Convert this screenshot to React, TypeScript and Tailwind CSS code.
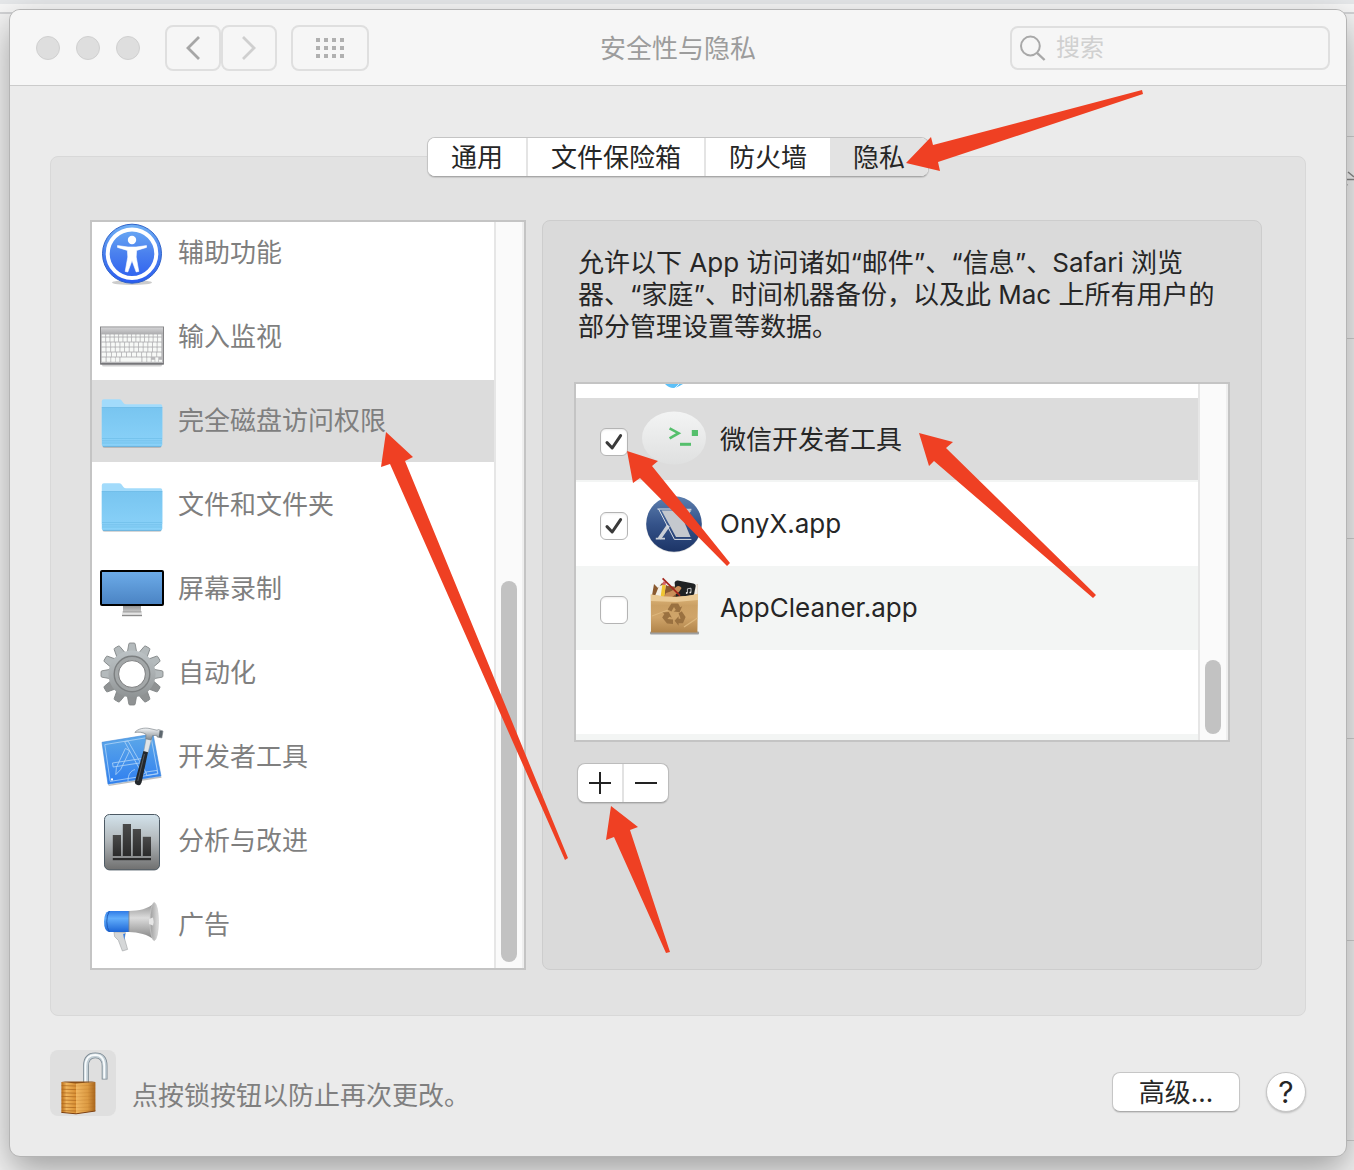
import React, { useState } from 'react';

type IconProps = { className?: string };

function AccessibilityIcon({ className }: IconProps) {
  return (
    <svg viewBox="0 0 64 64" className={className} aria-hidden="true">
      <defs>
        <linearGradient id="accBlue" x1="0" y1="0" x2="0" y2="1">
          <stop offset="0" stopColor="#6fb0f5" />
          <stop offset="0.5" stopColor="#4a80ee" />
          <stop offset="1" stopColor="#2a5cf0" />
        </linearGradient>
      </defs>
      <ellipse cx="32" cy="60.5" rx="20" ry="2.5" fill="#000" opacity="0.2" />
      <circle cx="32" cy="31.7" r="29.5" fill="url(#accBlue)" stroke="#2f62c8" />
      <circle cx="32" cy="31.7" r="24.3" fill="none" stroke="#fff" strokeWidth="4" />
      <circle cx="32" cy="18" r="4.2" fill="#fff" />
      <path
        d="M17.5 23.6 L28 25 H36 L46.5 23.6 V25.4 L36.6 28.4 L36.2 35 L38.8 49.4 L36.2 50 L32 38.5 L27.8 50 L25.2 49.4 L27.8 35 L27.4 28.4 L17.5 25.4Z"
        fill="#fff"
        stroke="#fff"
        strokeWidth="0.6"
        strokeLinejoin="round"
      />
    </svg>
  );
}

function KeyboardIcon({ className }: IconProps) {
  const rows = [
    { y: 28.6, h: 2, n: 14 },
    { y: 31.4, h: 4, n: 14 },
    { y: 36.4, h: 4, n: 13 },
    { y: 41.4, h: 4, n: 13 },
    { y: 46.4, h: 4, n: 12 },
  ];
  return (
    <svg viewBox="0 0 64 64" className={className} aria-hidden="true">
      <defs>
        <linearGradient id="kbTop" x1="0" y1="0" x2="0" y2="1">
          <stop offset="0" stopColor="#d4d4d6" />
          <stop offset="1" stopColor="#aeaeb0" />
        </linearGradient>
      </defs>
      <rect x="2" y="57" width="60" height="3.4" rx="1.5" fill="#000" opacity="0.18" />
      <rect x="0.5" y="21" width="63" height="37" fill="#b9b9bb" stroke="#858587" />
      <rect x="1" y="21.5" width="62" height="6.5" fill="url(#kbTop)" />
      <rect x="0.5" y="57" width="63" height="1.5" fill="#77777a" />
      {rows.map((row, i) => {
        const w = 60.4 / row.n;
        return Array.from({ length: row.n }, (_, k) => (
          <rect key={`${i}-${k}`} x={1.8 + k * w} y={row.y} width={w - 0.9} height={row.h} rx="0.5" fill="#f7f9f7" />
        ));
      })}
      {[1.8, 6.6, 11.2, 15.6].map((x) => (
        <rect key={x} x={x} y="51.4" width="3.8" height="4.4" rx="0.5" fill="#f7f9f7" />
      ))}
      <rect x="20.4" y="51.4" width="21" height="4.4" rx="0.5" fill="#f7f9f7" />
      <rect x="42.4" y="51.4" width="4" height="4.4" rx="0.5" fill="#f7f9f7" />
      <rect x="47.2" y="51.4" width="3.6" height="4.4" rx="0.5" fill="#f7f9f7" />
      <rect x="51.6" y="53.8" width="3" height="2" fill="#f7f9f7" />
      <rect x="55.3" y="51.4" width="3" height="4.4" fill="#f7f9f7" />
      <rect x="59" y="53.8" width="3" height="2" fill="#f7f9f7" />
    </svg>
  );
}

function FolderIcon({ className }: IconProps) {
  return (
    <svg viewBox="0 0 64 64" className={className} aria-hidden="true">
      <defs>
        <linearGradient id="folderFront" x1="0" y1="0" x2="0" y2="1">
          <stop offset="0" stopColor="#78c5f0" />
          <stop offset="1" stopColor="#8ad2f9" />
        </linearGradient>
      </defs>
      <rect x="2.5" y="50" width="59" height="8" rx="2" fill="#000" opacity="0.16" />
      <path
        d="M1.8 11.3 Q1.8 9.3 3.8 9.3 H19 Q20.6 9.3 21.6 10.6 L23.4 13 Q24.4 14.3 26 14.3 H60.3 Q62.3 14.3 62.3 16.3 V50 H1.8Z"
        fill="#a2dbfb"
      />
      <path d="M1.8 17.6 H62.3 V54.6 Q62.3 56.8 60 56.8 H4 Q1.8 56.8 1.8 54.6Z" fill="url(#folderFront)" />
      <path d="M1.8 17.5 H62.3" stroke="#6bb9e6" strokeWidth="0.8" />
      <path d="M2 48.5 H62 M2 50.8 H62 M2 53 H62" stroke="#6fbde8" strokeWidth="0.7" />
      <path d="M3 56.4 H61" stroke="#62abd6" strokeWidth="0.8" />
    </svg>
  );
}

function DisplayIcon({ className }: IconProps) {
  return (
    <svg viewBox="0 0 64 64" className={className} aria-hidden="true">
      <defs>
        <linearGradient id="screen" x1="0" y1="0" x2="0" y2="1">
          <stop offset="0" stopColor="#6cabe8" />
          <stop offset="1" stopColor="#4b84c4" />
        </linearGradient>
        <linearGradient id="stand" x1="0" y1="0" x2="0" y2="1">
          <stop offset="0" stopColor="#8e8e8e" />
          <stop offset="1" stopColor="#d0d0d0" />
        </linearGradient>
      </defs>
      <rect x="23" y="47" width="18" height="8" fill="url(#stand)" />
      <rect x="22.6" y="53.4" width="19" height="1.2" fill="#9a9a9a" />
      <rect x="22" y="54.6" width="20" height="2.2" fill="#e4e4e4" />
      <rect x="22" y="56.8" width="20" height="1.4" fill="#8b8b8b" />
      <rect x="0" y="12" width="64" height="36" rx="2" fill="#000" />
      <rect x="2" y="14" width="60" height="32" fill="url(#screen)" />
    </svg>
  );
}

function GearIcon({ className }: IconProps) {
  return (
    <svg viewBox="0 0 64 64" className={className} aria-hidden="true">
      <defs>
        <linearGradient id="gearBody" gradientUnits="userSpaceOnUse" x1="0" y1="0" x2="0" y2="64">
          <stop offset="0" stopColor="#c3cacd" />
          <stop offset="0.5" stopColor="#a9aeb0" />
          <stop offset="1" stopColor="#85898a" />
        </linearGradient>
        <mask id="gearHole">
          <rect width="64" height="64" fill="#fff" />
          <circle cx="32" cy="32" r="13.4" fill="#000" />
        </mask>
      </defs>
      <g mask="url(#gearHole)">
        <g stroke="#7d8182" strokeWidth="0.8">
          {Array.from({ length: 12 }, (_, i) => (
            <path key={i} d="M27 12 L28.8 2 Q29 1 30 1 H34 Q35 1 35.2 2 L37 12Z" fill={i > 3 && i < 9 ? '#8f9293' : '#b4babc'} transform={`rotate(${i * 30} 32 32)`} />
          ))}
        </g>
        <circle cx="32" cy="32" r="23.6" fill="url(#gearBody)" />
        <circle cx="32" cy="32" r="16" fill="none" stroke="#7c7f80" strokeWidth="5" />
        <circle cx="32" cy="32" r="15.4" fill="none" stroke="#a3a7a8" strokeWidth="3.4" />
      </g>
      <circle cx="32" cy="32" r="13.4" fill="none" stroke="#6e7071" strokeWidth="0.8" />
    </svg>
  );
}

function DevToolsIcon({ className }: IconProps) {
  return (
    <svg viewBox="0 0 64 64" className={className} aria-hidden="true">
      <defs>
        <linearGradient id="blueprint" x1="0" y1="0" x2="0" y2="1">
          <stop offset="0" stopColor="#5ea9e8" />
          <stop offset="1" stopColor="#2f7ff0" />
        </linearGradient>
        <linearGradient id="hammerHead" x1="0" y1="0" x2="0" y2="1">
          <stop offset="0" stopColor="#f4f6f7" />
          <stop offset="1" stopColor="#7d868c" />
        </linearGradient>
      </defs>
      <path d="M8.6 59.4 L61.4 51" stroke="#000" strokeWidth="1.4" opacity="0.25" />
      <path d="M2 16.3 L53 8 L61 50 L8 58.2Z" fill="url(#blueprint)" stroke="#3f86d8" strokeWidth="0.6" />
      <g fill="none" stroke="#b3d6f8" strokeWidth="0.8">
        <path d="M4.8 18.6 L51 11 L58 47.8 L10.2 55.4Z" />
        <path d="M12.5 37 L44 32.2 L44.8 36.2 L13.2 41Z" />
        <path d="M24.6 15.6 L28 15 L46 46.5 L42.6 48.6Z" />
        <path d="M25.4 22.4 L29.6 24.8 L20.6 43.6 L15.8 48.6 L16.4 41.4Z" />
        <path d="M28 55 C28 48 31 44.6 35 43.6" />
        <path d="M46 46 L57 44.4 L57.6 47.6 L46.6 49.4Z" />
      </g>
      <rect x="11" y="52.4" width="2" height="2" fill="#fff" />
      <path d="M46.6 10 L51.8 12 L48 27 L43.6 26Z" fill="#dfe4e7" stroke="#8b949a" strokeWidth="0.5" />
      <path d="M43.4 25 L48 26.2 L41.6 56.4 Q40.6 59.8 37.4 59 Q34.2 58.2 35 55.2Z" fill="#23282c" />
      <path d="M44.4 28 L37.8 55" stroke="#596066" strokeWidth="0.9" />
      <path
        d="M34.8 6.4 C38 2.6 44 1.6 49 2.4 L57 4.2 L58.4 3.6 L63 5 L61.8 12 L57.2 11 L56.6 9.4 L52.6 9.6 L51 14 L45.8 12.8 L46 8.4 C42.6 6 39 6 34.8 6.4Z"
        fill="url(#hammerHead)"
        stroke="#6d767c"
        strokeWidth="0.6"
      />
      <path d="M59.6 4.4 L62.8 5.2 L61.6 11.6 L58.8 11Z" fill="#5d676e" />
    </svg>
  );
}

function AnalyticsIcon({ className }: IconProps) {
  return (
    <svg viewBox="0 0 64 64" className={className} aria-hidden="true">
      <defs>
        <linearGradient id="chartBg" x1="0" y1="0" x2="0" y2="1">
          <stop offset="0" stopColor="#d3e3ec" />
          <stop offset="0.45" stopColor="#b3b9bc" />
          <stop offset="1" stopColor="#6f6f6f" />
        </linearGradient>
        <linearGradient id="chartBar" x1="0" y1="0" x2="0" y2="1">
          <stop offset="0" stopColor="#4a4a4a" />
          <stop offset="1" stopColor="#2b2b2b" />
        </linearGradient>
      </defs>
      <rect x="4.5" y="4.5" width="55" height="55.4" rx="5" fill="url(#chartBg)" stroke="#4d5a64" />
      <rect x="12.8" y="25" width="8.2" height="21" fill="url(#chartBar)" />
      <rect x="22.8" y="14" width="8.2" height="32" fill="url(#chartBar)" />
      <rect x="32.8" y="19" width="8.2" height="27" fill="url(#chartBar)" />
      <rect x="42.8" y="26.8" width="8.2" height="19.2" fill="url(#chartBar)" />
      <rect x="12.8" y="48" width="38.2" height="2.2" fill="#2a2a2a" />
    </svg>
  );
}

function MegaphoneIcon({ className }: IconProps) {
  return (
    <svg viewBox="0 0 64 64" className={className} aria-hidden="true">
      <defs>
        <linearGradient id="megaBlue" x1="0" y1="0" x2="0" y2="1">
          <stop offset="0" stopColor="#2f7be6" />
          <stop offset="0.35" stopColor="#62aefb" />
          <stop offset="1" stopColor="#1d66d6" />
        </linearGradient>
        <linearGradient id="megaHorn" x1="0" y1="0" x2="0" y2="1">
          <stop offset="0" stopColor="#8e8e8e" />
          <stop offset="0.4" stopColor="#dcdcdc" />
          <stop offset="1" stopColor="#7e7e7e" />
        </linearGradient>
        <linearGradient id="megaMouth" x1="0" y1="0" x2="1" y2="0">
          <stop offset="0" stopColor="#9c9c9c" />
          <stop offset="1" stopColor="#dedede" />
        </linearGradient>
      </defs>
      <path d="M14 38 L25.6 38.6 L24.4 44 L27.6 55.4 L22.4 57 L18.4 46.4 L14.6 42.6Z" fill="#d5d7d8" stroke="#9fa2a4" strokeWidth="0.6" />
      <path d="M23.2 40 L25.2 39.6 L24.2 46Z" fill="#2e7be4" />
      <path d="M29 17 H9 Q4 18.4 4 27.6 Q4 37 9 38 H29Z" fill="url(#megaBlue)" />
      <path d="M9.4 17 Q6.6 22 6.8 27.6 Q6.8 34 9.4 38" fill="none" stroke="#1b57b4" strokeWidth="0.9" />
      <path d="M29 17 C39 17 48 15 54.4 8.8 Q60 27 54.8 46.6 C48 40 38 38.4 29 38Z" fill="url(#megaHorn)" />
      <ellipse cx="54.2" cy="27.6" rx="4.2" ry="19" fill="url(#megaMouth)" stroke="#c9c9c9" strokeWidth="0.7" />
      <path d="M49 25 L53 23.4 Q54.4 27.6 53 31.6 L49 30Z" fill="#e6e6e6" />
      <path d="M29 17 V38" stroke="#7f8183" strokeWidth="0.8" />
    </svg>
  );
}

function WechatDevIcon({ className }: IconProps) {
  return (
    <svg viewBox="0 0 64 64" className={className} aria-hidden="true">
      <defs>
        <linearGradient id="bubble" x1="0" y1="0" x2="0" y2="1">
          <stop offset="0" stopColor="#f3f4f4" />
          <stop offset="1" stopColor="#dfe0e0" />
        </linearGradient>
      </defs>
      <ellipse cx="32" cy="30" rx="32" ry="26.6" fill="url(#bubble)" />
      <path d="M27.6 20.4 L36.6 25.2 L27.6 30.4" fill="none" stroke="#55bf6c" strokeWidth="2.6" />
      <rect x="38" y="34.8" width="11" height="3" fill="#55bf6c" />
      <rect x="49.8" y="22" width="6.2" height="6" fill="#55bf6c" />
    </svg>
  );
}

function OnyxIcon({ className }: IconProps) {
  return (
    <svg viewBox="0 0 64 64" className={className} aria-hidden="true">
      <defs>
        <linearGradient id="onyx" x1="0" y1="0" x2="0" y2="1">
          <stop offset="0" stopColor="#5d7fae" />
          <stop offset="0.5" stopColor="#35538a" />
          <stop offset="1" stopColor="#1c3466" />
        </linearGradient>
      </defs>
      <circle cx="32" cy="32.6" r="28" fill="#000" opacity="0.15" />
      <circle cx="32" cy="32" r="27.8" fill="url(#onyx)" />
      <path d="M47.6 18 L39 29 M26.4 33.4 L17.4 46.4" stroke="#c9ced6" strokeWidth="3.6" />
      <path d="M13.8 45.8 H23 V47.4 H13.8Z M42 16.8 H49.4 V18.4 H42Z" fill="#c9ced6" />
      <path d="M19.6 18.4 H37.4 L48.6 45 H34Z" fill="#c4c8ce" />
      <path d="M15.4 17 H40 M16.6 17 L32.4 47.4 H49.4" fill="none" stroke="#dde1e6" strokeWidth="1" />
    </svg>
  );
}

function AppCleanerIcon({ className }: IconProps) {
  return (
    <svg viewBox="0 0 64 64" className={className} aria-hidden="true">
      <defs>
        <linearGradient id="bag" x1="0" y1="0" x2="0" y2="1">
          <stop offset="0" stopColor="#e0b97d" />
          <stop offset="0.3" stopColor="#cba064" />
          <stop offset="0.6" stopColor="#d0a56a" />
          <stop offset="1" stopColor="#b08349" />
        </linearGradient>
      </defs>
      <rect x="8" y="55.6" width="49" height="3" rx="1" fill="#000" opacity="0.35" />
      <path d="M9.6 22 L12 8 L16 12 L20 7 L26 10 L52 12 L55.4 8 V22Z" fill="#8a5a30" />
      <path d="M13 20 L17 10 L24 8 L22 21Z" fill="#f3eee4" />
      <path d="M50 20 L53 9 L55.6 8.4 V20Z" fill="#f3eee4" />
      <path d="M32.6 6.4 Q33.4 4.2 36 4.6 L51.4 7.4 Q54 8 53.6 10.6 L51.6 20.6 H34Z" fill="#1f2224" />
      <path d="M45.4 17 V12.8 L49 12.2 V16.4" fill="none" stroke="#e9e9e9" strokeWidth="0.8" />
      <circle cx="44.7" cy="17" r="0.9" fill="#e9e9e9" />
      <circle cx="48.3" cy="16.4" r="0.9" fill="#e9e9e9" />
      <path d="M18.4 22 L20.4 8.6 L23.6 9 L22.4 22Z" fill="#f0c531" />
      <path d="M20.4 8.6 L21 5.4 L24 6 L23.6 9Z" fill="#d4626a" />
      <path d="M24 17 Q31 15.6 34 11 Q37 8.4 39.6 12 L37 16 L30 21 H22Z" fill="#c98e58" />
      <path d="M20.6 2.4 L38 19.6" stroke="#a3261d" strokeWidth="1.8" />
      <path d="M8.8 18.6 L22 20.6 L34 21 L46 19.8 L56 18 L55.4 56.6 H9Z" fill="url(#bag)" />
      <path d="M8.8 18.6 L22 20.6 L34 21 L46 19.8 L56 18 V24 L34 26 L9 25Z" fill="#eaca96" />
      <path d="M10 40 L26 34 M42 51 L55.4 42" stroke="#dcb67c" strokeWidth="1.2" fill="none" />
      <g fill="#9a7140">
        <path d="M25.6 33.6 L29.4 27.6 H36.2 L38.2 31.2 L40.2 30.2 L37.6 36.2 L31.6 35.4 L33.8 34 L32 31 L29.4 35.6Z" />
        <path d="M39.8 35.2 L43.6 41 L41 47.2 H36.6 V49.8 L32.6 44.8 L36.6 40.2 V42.8 H38.6 L36.6 37.2Z" />
        <path d="M20.4 36.6 L26.8 36 L29.8 41.8 L27.4 40.8 L25.4 43 L31 43.4 V48 L25 47.6 L20.2 41.4 L22.4 38Z" />
      </g>
    </svg>
  );
}

function PadlockIcon({ className }: IconProps) {
  return (
    <svg viewBox="0 0 66 66" className={className} aria-hidden="true">
      <defs>
        <linearGradient id="lockLeft" x1="0" y1="0" x2="1" y2="0">
          <stop offset="0" stopColor="#b96c18" />
          <stop offset="0.35" stopColor="#f0b55c" />
          <stop offset="1" stopColor="#d98f33" />
        </linearGradient>
        <linearGradient id="lockRight" x1="0" y1="0" x2="1" y2="0">
          <stop offset="0" stopColor="#f1b862" />
          <stop offset="0.6" stopColor="#dc9a42" />
          <stop offset="1" stopColor="#a8651c" />
        </linearGradient>
      </defs>
      <path d="M36 33 V16 Q36 5.4 45.3 5.4 Q54.6 5.4 54.6 16 V29.4" fill="none" stroke="#7d8a93" strokeWidth="5.8" />
      <path d="M36 33 V16 Q36 5.4 45.3 5.4 Q54.6 5.4 54.6 16 V28.8" fill="none" stroke="#c3cfd6" strokeWidth="4.2" />
      <path d="M35.4 33 V16 Q35.6 4.8 45.3 4.8 Q54.2 5 54.2 16 V28.6" fill="none" stroke="#f8fbfc" strokeWidth="1.8" />
      <path d="M11.4 32 L26 33 V63.8 L11.4 62.4Z" fill="url(#lockLeft)" />
      <path d="M26 33 L45.4 32 V61 L26 63.8Z" fill="url(#lockRight)" />
      <path d="M11.4 32 L15 31.4 H42 L45.4 32 L26 33.4Z" fill="#8a4f17" />
      {[36, 39.6, 43.2, 46.8, 50.4, 54, 57.6, 61].map((y) => (
        <React.Fragment key={y}>
          <path d={`M11.6 ${y - 0.4} L26 ${y}`} stroke="#a9641c" strokeWidth="1" opacity="0.7" />
          <path d={`M26 ${y} L45.2 ${y - 0.8}`} stroke="#a9641c" strokeWidth="0.7" opacity="0.3" />
        </React.Fragment>
      ))}
      <path d="M11.4 62.4 L26 63.8 L45.4 61" fill="none" stroke="#7c3f10" strokeWidth="1" />
    </svg>
  );
}

const tabs = ['通用', '文件保险箱', '防火墙', '隐私'];

const categories = [
  { name: '辅助功能', Icon: AccessibilityIcon },
  { name: '输入监视', Icon: KeyboardIcon },
  { name: '完全磁盘访问权限', Icon: FolderIcon },
  { name: '文件和文件夹', Icon: FolderIcon },
  { name: '屏幕录制', Icon: DisplayIcon },
  { name: '自动化', Icon: GearIcon },
  { name: '开发者工具', Icon: DevToolsIcon },
  { name: '分析与改进', Icon: AnalyticsIcon },
  { name: '广告', Icon: MegaphoneIcon },
];

const initialApps = [
  { name: '微信开发者工具', Icon: WechatDevIcon, allowed: true, row: 'bg-[#dcdcdc]' },
  { name: 'OnyX.app', Icon: OnyxIcon, allowed: true, row: 'bg-white' },
  { name: 'AppCleaner.app', Icon: AppCleanerIcon, allowed: false, row: 'bg-[#f3f5f4]' },
];

// Always-visible legacy scroll bar
function ScrollTrack({ thumb }: { thumb: string }) {
  return (
    <div className="flex w-[30px] shrink-0 flex-col items-center justify-end border-x-2 border-l-[#e6e6e6] border-r-[#eeeeee] bg-[#fafafa] pb-1.5">
      <div className={`w-4 rounded-full bg-[#c2c2c2] ${thumb}`} />
    </div>
  );
}

function Toolbar() {
  const navButton = 'flex h-[46px] items-center justify-center rounded-lg border-2 border-[#dfdfdf]';
  return (
    <header className="grid h-[76px] grid-cols-[1fr_auto_1fr] items-center rounded-t-[10px] border-b border-[#cbcbcb] bg-[#f6f6f6] px-4">
      <div className="ml-2.5 flex items-center">
        <div className="mr-[25px] flex gap-4">
          {['关闭', '最小化', '缩放'].map((label) => (
            <button key={label} aria-label={label} className="size-6 rounded-full border border-[#d0d0d0] bg-[#dedede]" />
          ))}
        </div>
        <button aria-label="后退" className={`${navButton} w-14`}>
          <svg viewBox="0 0 16 26" className="h-[26px] w-4" fill="none" stroke="#a6a6a6" strokeWidth="2.8">
            <path d="M14 2 L3 13 L14 24" />
          </svg>
        </button>
        <button aria-label="前进" className={`${navButton} w-14`}>
          <svg viewBox="0 0 16 26" className="h-[26px] w-4" fill="none" stroke="#cfcfcf" strokeWidth="2.8">
            <path d="M2 2 L13 13 L2 24" />
          </svg>
        </button>
        <button aria-label="显示全部" className={`${navButton} ml-3.5 w-[78px]`}>
          <svg viewBox="0 0 28 20" className="h-5 w-7" fill="#b0b0b0">
            {[0, 8, 16].map((y) => [0, 8, 16, 24].map((x) => <rect key={`${x}-${y}`} x={x} y={y} width="4" height="4" />))}
          </svg>
        </button>
      </div>
      <h1 className="pt-0.5 text-[26px] leading-8 text-[#9c9c9c]">安全性与隐私</h1>
      <label className="flex h-11 w-80 items-center gap-2.5 justify-self-end rounded-lg border-2 border-[#dfdfdf] px-2">
        <svg viewBox="0 0 26 26" className="size-[26px] shrink-0" fill="none" stroke="#a8a8a8" strokeWidth="2" aria-hidden="true">
          <circle cx="10.4" cy="11" r="9.4" />
          <path d="M17 17.8 L24.6 25" strokeWidth="2.4" />
        </svg>
        <input type="search" aria-label="搜索" placeholder="搜索" className="w-full min-w-0 bg-transparent text-2xl leading-8 outline-none placeholder:text-[#d0d0d0]" />
      </label>
    </header>
  );
}

function TabBar() {
  return (
    <div role="tablist" className="relative z-10 -mb-[21px] flex h-10 self-center overflow-hidden rounded-lg border border-[#c4c4c4] border-b-[#a8a8a8] bg-white shadow-[0_1px_1px_rgba(0,0,0,0.12)]">
      {tabs.map((tab, i) => (
        <button
          key={tab}
          role="tab"
          aria-selected={i === 3}
          className={`px-[23px] pt-0.5 text-[26px] leading-8 text-[#262626] ${i === 3 ? 'bg-[#e3e3e3]' : 'bg-white'} ${i < 2 ? 'border-r-2 border-[#e4e4e4]' : ''}`}
        >
          {tab}
        </button>
      ))}
    </div>
  );
}

function CategoryList() {
  return (
    <nav className="flex h-[750px] w-[436px] shrink-0 border-2 border-[#c4c4c4] bg-white">
      <ul className="flex flex-1 flex-col justify-end overflow-hidden">
        {categories.map(({ name, Icon }, i) => (
          <li key={name} className={`h-[84px] shrink-0 border-b-2 border-white ${i === 2 ? 'bg-[#dcdcdc]' : ''}`}>
            <button className="flex h-full w-full items-center gap-3.5 pl-2 text-left">
              <Icon className="mt-0.5 size-16 shrink-0" />
              <span className="text-[26px] leading-8 text-[#7f7f7f]">{name}</span>
            </button>
          </li>
        ))}
      </ul>
      <ScrollTrack thumb="h-[381px]" />
    </nav>
  );
}

function AppList() {
  const [apps, setApps] = useState(initialApps);

  const toggle = (name: string) => {
    setApps(apps.map((app) => (app.name === name ? { ...app, allowed: !app.allowed } : app)));
  };

  return (
    <div className="flex h-[360px] border-2 border-[#c4c4c4] bg-white">
      <ul className="flex flex-1 flex-col overflow-hidden">
        {/* tail of the row that is scrolled out of view */}
        <li className="h-3.5 shrink-0 pl-[88px]">
          <svg viewBox="0 0 20 5" className="h-[5px] w-5" aria-hidden="true">
            <path d="M1 0 H19 Q15 2.4 12 3.6 Q6 5 1 0Z" fill="#5cc0f8" />
            <path d="M11 4 L15 0" stroke="#fff" strokeWidth="0.8" />
          </svg>
        </li>
        {apps.map(({ name, Icon, allowed, row }, i) => (
          <li key={name} className={`h-[84px] shrink-0 ${row} ${i === 0 ? 'border-b-2 border-[#f3f5f4]' : 'pb-0.5'}`}>
            <label className="flex h-full items-center gap-3.5 pl-6">
              <span className="relative mt-1.5 size-7 shrink-0">
                <input
                  type="checkbox"
                  checked={allowed}
                  onChange={() => toggle(name)}
                  className="peer block size-7 appearance-none rounded-md border border-[#b4b4b4] bg-white shadow-[inset_0_1px_2px_rgba(0,0,0,0.08)]"
                />
                <svg viewBox="0 0 28 28" className="pointer-events-none absolute inset-0 hidden size-7 peer-checked:block" fill="none" stroke="#3a3a3a" strokeWidth="3" strokeLinecap="round" strokeLinejoin="round">
                  <path d="M7 14.6 L12.2 20 L20.6 7.6" />
                </svg>
              </span>
              <Icon className="mt-0.5 size-16 shrink-0" />
              <span className="pt-0.5 text-[26px] leading-8 text-[#262626]">{name}</span>
            </label>
          </li>
        ))}
        <li className="h-[84px] shrink-0 bg-white" />
        <li className="h-1.5 shrink-0 bg-[#f3f5f4]" />
      </ul>
      <ScrollTrack thumb="h-[74px]" />
    </div>
  );
}

function PrivacyDetail() {
  return (
    <section className="flex-1 rounded-lg border border-[#cdcdcd] bg-[#dadada] px-[31px] pt-[26px] pb-8">
      <p className="mb-[39px] pl-1 text-[26px] leading-8 text-[#262626]">
        允许以下 App 访问诸如“邮件”、“信息”、Safari 浏览器、“家庭”、时间机器备份，以及此 Mac 上所有用户的部分管理设置等数据。
      </p>
      <AppList />
      <div className="mt-[21px] ml-[3px] inline-flex h-10 overflow-hidden rounded-lg border border-[#bcbcbc] border-b-[#a4a4a4] bg-white shadow-[0_1px_1px_rgba(0,0,0,0.12)]">
        <button aria-label="添加" className="flex w-[46px] items-center justify-center border-r-2 border-[#e2e2e2]">
          <svg viewBox="0 0 22 22" className="size-[22px]" stroke="#222" strokeWidth="2">
            <path d="M0 11 H22 M11 0 V22" />
          </svg>
        </button>
        <button aria-label="移除" className="flex w-11 items-center justify-center">
          <svg viewBox="0 0 22 22" className="size-[22px]" stroke="#222" strokeWidth="2">
            <path d="M0 11 H22" />
          </svg>
        </button>
      </div>
    </section>
  );
}

function Footer() {
  return (
    <footer className="mt-[34px] flex items-end">
      <button aria-label="锁定" className="size-[66px] rounded-lg bg-[#dfdfdf]">
        <PadlockIcon className="size-[66px]" />
      </button>
      <p className="ml-4 pb-1 text-[26px] leading-8 text-[#7f7f7f]">点按锁按钮以防止再次更改。</p>
      <div className="mb-1 ml-auto flex items-center gap-[26px]">
        <button className="h-10 w-32 rounded-lg border border-[#c6c6c6] border-b-[#ababab] bg-white pt-0.5 text-[26px] leading-8 text-[#262626] shadow-[0_1px_1px_rgba(0,0,0,0.12)]">
          高级...
        </button>
        <button aria-label="帮助" className="size-10 rounded-full border border-[#c6c6c6] bg-white text-3xl leading-8 text-[#262626] shadow-[0_1px_2px_rgba(0,0,0,0.2)]">
          ?
        </button>
      </div>
    </footer>
  );
}

// Red marker arrows drawn on top of the window
function Annotations() {
  return (
    <svg className="pointer-events-none absolute top-0 left-0 z-20 h-[1170px] w-[1354px]" viewBox="0 0 1354 1170" fill="#ef4023" aria-hidden="true">
      <path d="M906 163 L931 137 L933 145 L1142 90 L1143 94 L938 162 L940 171Z" />
      <path d="M386 432 L413 457 L405 461 L568 858 L565 860 L390 464 L381 467Z" />
      <path d="M627 451 L658 461 L652 466 L730 563 L727 566 L640 478 L633 483Z" />
      <path d="M919 433 L953 442 L946 448 L1096 595 L1093 598 L934 461 L929 466Z" />
      <path d="M611 806 L638 827 L630 830 L670 952 L666 953 L614 837 L606 840Z" />
    </svg>
  );
}

function App() {
  return (
    <div className="relative min-h-screen overflow-hidden bg-[linear-gradient(#e6e8ea_4px,#f7f7f7_4px,#f7f7f7_12px,#d2d3d5_12px,#d2d3d5_14px,#f4f4f4_14px)] pt-[9px] pr-[7px] pb-[13px] pl-[9px] font-['Inter','Noto_Sans_CJK_SC',sans-serif]">
      {/* page behind the window */}
      <svg className="absolute top-0 right-0 h-[1170px] w-2" viewBox="0 0 8 1170" fill="none" aria-hidden="true">
        <path d="M0 136.5 H8 M0 338.5 H8 M0 538.5 H8 M0 738.5 H8 M0 940.5 H8 M0 1140.5 H8" stroke="#d0d0d0" />
        <path d="M0 179.5 H8 M2 172 L8 177 M1 184 L0 187" stroke="#8a8a8a" strokeWidth="1.4" />
      </svg>
      <main className="relative rounded-[11px] border border-[#b4b4b4] bg-[#ebebeb] shadow-[0_14px_36px_rgba(0,0,0,0.35)]">
        <Toolbar />
        <div className="flex flex-col px-10 pt-[51px] pb-10">
          <TabBar />
          <div className="flex gap-4 rounded-lg border border-[#d8d8d8] bg-[#e2e2e2] pt-[63px] pr-[43px] pb-[45px] pl-[39px]">
            <CategoryList />
            <PrivacyDetail />
          </div>
          <Footer />
        </div>
      </main>
      <Annotations />
    </div>
  );
}

export default App;
